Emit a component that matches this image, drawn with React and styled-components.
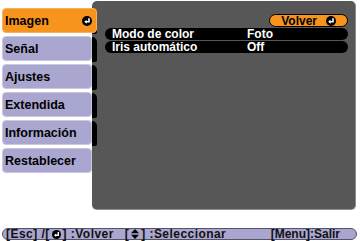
import React from 'react'
import styled, {createGlobalStyle} from 'styled-components'

const GlobalStyle = createGlobalStyle`
  body {
    margin: 0;
    background: #fff;
    font-family: "Liberation Sans", Arial, sans-serif;
  }
`

const menuItems = ['Imagen', 'Señal', 'Ajustes', 'Extendida', 'Información', 'Restablecer']

const rows = [
  {label: 'Modo de color', value: 'Foto'},
  {label: 'Iris automático', value: 'Off'}
]

const EnterIcon = ({size = 10}) => (
  <svg width={size} height={size} viewBox="0 0 10 10">
    <circle cx="5" cy="5" r="5" fill="#000" />
    <path d="M7 2.3 V5.8 H4" stroke="#fff" strokeWidth="1.6" fill="none" />
    <path d="M2.2 5.8 L4.6 3.8 L4.6 7.8 Z" fill="#fff" />
  </svg>
)

const UpDownIcon = () => (
  <svg width="8" height="10" viewBox="0 0 8 10">
    <path d="M4 0 L8 4.2 H0 Z" fill="#000" />
    <path d="M4 10 L8 5.8 H0 Z" fill="#000" />
  </svg>
)

function App() {
  return (
    <Screen>
      <GlobalStyle />
      <Main>
        <Menu>
          {menuItems.map((item, i) => (
            <MenuItem key={item} active={i === 0}>
              <span>{item}</span>
              {i === 0 && <EnterIcon />}
            </MenuItem>
          ))}
        </Menu>
        <Panel>
          <Rail>
            {menuItems.map((item, i) => (
              <RailTab key={item} hidden={i === 0} />
            ))}
          </Rail>
          <Content>
            <BackRow>
              <BackButton>
                <span>Volver</span>
                <EnterIcon />
              </BackButton>
            </BackRow>
            <Rows>
              {rows.map(r => (
                <Row key={r.label}>
                  <RowLabel>{r.label}</RowLabel>
                  <span>{r.value}</span>
                </Row>
              ))}
            </Rows>
          </Content>
        </Panel>
      </Main>
      <Footer>
        <FooterGroup>
          <span>[Esc] /[</span><EnterIcon size={9} /><span>] :Volver</span>
          <Spacer />
          <span>[</span><UpDownIcon /><span>] :Seleccionar</span>
        </FooterGroup>
        <span>[Menu]:Salir</span>
      </Footer>
    </Screen>
  )
}

const Screen = styled.div`
  width: 360px;
  height: 241px;
  display: flex;
  flex-direction: column;
  overflow: hidden;
`

const Main = styled.div`
  display: flex;
  padding: 1px 0 0 2px;
`

const Menu = styled.div`
  width: 90px;
  padding-top: 7px;
  display: flex;
  flex-direction: column;
  gap: 3px;
`

const MenuItem = styled.div`
  position: relative;
  z-index: 1;
  height: 25px;
  width: ${props => props.active ? '95px' : '90px'};
  box-sizing: border-box;
  display: flex;
  align-items: center;
  justify-content: space-between;
  padding: 0 4px 0 2px;
  background: ${props => props.active ? '#f7941e' : '#a9a6cf'};
  border: 1px solid ${props => props.active ? '#f9b060' : '#c9c7e2'};
  border-radius: 4px;
  color: #000;
  font-size: 12.5px;
  font-weight: bold;
`

const Panel = styled.div`
  width: 264px;
  height: 209px;
  box-sizing: border-box;
  background: #575757;
  border-right: 1px solid #8d8d8d;
  border-bottom: 1px solid #8d8d8d;
  border-radius: 5px;
  display: flex;
`

const Rail = styled.div`
  width: 5px;
  padding-top: 8px;
  display: flex;
  flex-direction: column;
  gap: 3px;
`

const RailTab = styled.div`
  height: 25px;
  background: ${props => props.hidden ? 'transparent' : '#000'};
  border-radius: 0 5px 2px 0;
`

const Content = styled.div`
  flex: 1;
  padding: 13px 7px 0 8px;
`

const BackRow = styled.div`
  display: flex;
  justify-content: flex-end;
`

const BackButton = styled.div`
  width: 79px;
  height: 13px;
  box-sizing: border-box;
  background: #f7941e;
  border: 1px solid #000;
  border-radius: 7px;
  display: flex;
  align-items: center;
  justify-content: flex-end;
  gap: 9px;
  padding-right: 11px;
  font-size: 12px;
  font-weight: bold;
  color: #000;
`

const Rows = styled.div`
  margin-top: 1px;
  display: flex;
  flex-direction: column;
  gap: 1px;
`

const Row = styled.div`
  height: 12px;
  background: #000;
  border-radius: 6px;
  display: flex;
  align-items: center;
  padding-left: 7px;
  color: #fff;
  font-size: 12px;
  font-weight: bold;
`

const RowLabel = styled.span`
  width: 135px;
`

const Footer = styled.div`
  margin: 18px 0 0 2px;
  width: 355px;
  height: 12px;
  box-sizing: border-box;
  background: #a9a6cf;
  border: 1px solid #55536b;
  border-radius: 6px;
  display: flex;
  align-items: center;
  justify-content: space-between;
  padding: 0 16px 0 3px;
  color: #111;
  font-size: 12px;
  font-weight: bold;
`

const FooterGroup = styled.div`
  display: flex;
  align-items: center;
  gap: 2px;
  letter-spacing: 0.45px;
`

const Spacer = styled.span`
  width: 7px;
`

export default App
